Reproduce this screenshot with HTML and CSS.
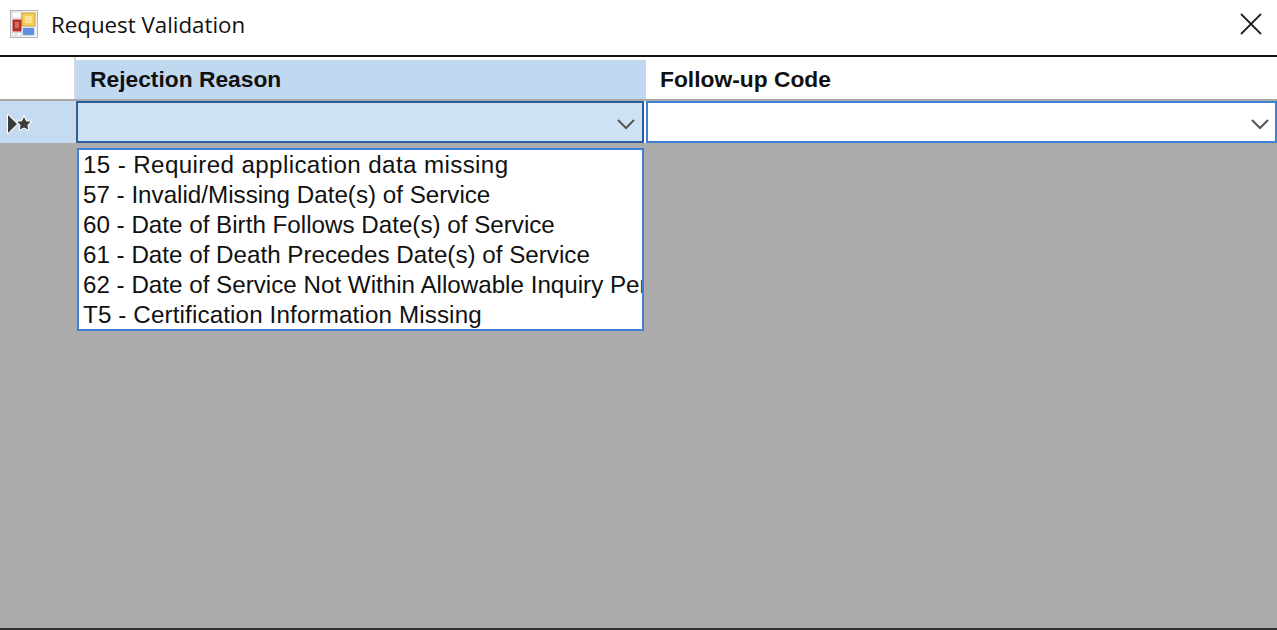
FILE: index.html
```html
<!DOCTYPE html>
<html lang="en">
<head>
    <meta charset="UTF-8">
    <meta name="viewport" content="width=device-width, initial-scale=1.0">
    <title>Request Validation</title>
    <link rel="stylesheet" href="styles.css">
</head>
<body>

    <!-- Title bar -->
    <header class="titlebar">
        <svg class="app-icon" viewBox="0 0 28 28" aria-hidden="true">
            <rect x="0.5" y="0.5" width="27" height="27" fill="#f4f4f4" stroke="#b4b4b4"/>
            <rect x="2" y="2" width="9" height="6" fill="#fff" stroke="#c4c4c4" stroke-width="0.6"/>
            <rect x="12" y="3" width="13" height="13" fill="#f5cf5e" stroke="#c9a02e"/>
            <rect x="15" y="6" width="7" height="7" fill="#fae394"/>
            <rect x="3" y="10" width="8" height="11" fill="#b8352a" stroke="#a32b22"/>
            <rect x="5" y="12" width="4" height="6" fill="#d8685c"/>
            <rect x="13" y="18" width="11" height="7" fill="#5c8fe0" stroke="#7ba6e6" stroke-width="0.6"/>
            <rect x="2.5" y="22.5" width="3" height="3.5" fill="#fff" stroke="#c4c4c4" stroke-width="0.6"/>
            <rect x="7" y="22.5" width="4" height="3.5" fill="#fff" stroke="#c4c4c4" stroke-width="0.6"/>
        </svg>
        <span class="window-title">Request Validation</span>
        <svg class="close-icon" viewBox="0 0 22 22" aria-hidden="true">
            <path d="M1 1 L21 21 M21 1 L1 21" fill="none" stroke="#222" stroke-width="1.8"/>
        </svg>
    </header>

    <!-- Grid -->
    <main class="grid-area">
        <div class="grid-row header-row">
            <div class="corner-cell"></div>
            <div class="col-head col-reason selected">Rejection Reason</div>
            <div class="col-head col-code">Follow-up Code</div>
        </div>

        <div class="grid-row edit-row">
            <div class="row-head">
                <svg class="row-marker" viewBox="0 0 26 20" aria-hidden="true">
                    <path class="marker-shape" d="M2 1 L11 10 L2 19 Z"/>
                    <path class="marker-shape" d="M18 3 L20.1 7.2 L24.7 7.8 L21.4 11 L22.2 15.5 L18 13.4 L13.8 15.5 L14.6 11 L11.3 7.8 L15.9 7.2 Z"/>
                </svg>
            </div>
            <div class="combo combo-active col-reason">
                <svg class="chevron" viewBox="0 0 20 12" aria-hidden="true"><path d="M2 2 L10 10 L18 2" fill="none" stroke="#555" stroke-width="2"/></svg>
            </div>
            <div class="combo col-code">
                <svg class="chevron" viewBox="0 0 20 12" aria-hidden="true"><path d="M2 2 L10 10 L18 2" fill="none" stroke="#555" stroke-width="2"/></svg>
            </div>
        </div>

        <!-- Open dropdown list -->
        <ul class="dropdown">
            <li>15 - Required application data missing</li>
            <li>57 - Invalid/Missing Date(s) of Service</li>
            <li>60 - Date of Birth Follows Date(s) of Service</li>
            <li>61 - Date of Death Precedes Date(s) of Service</li>
            <li>62 - Date of Service Not Within Allowable Inquiry Period</li>
            <li>T5 - Certification Information Missing</li>
        </ul>
    </main>

</body>
</html>
```

FILE: styles.css
```css
/* --- Window --- */
html, body {
    height: 100%;
    margin: 0;
}

body {
    display: flex;
    flex-direction: column;
    overflow: hidden;
    background-color: #fff;
    font-family: "Liberation Sans", Arial, sans-serif;
    color: #111;
}

.titlebar {
    flex: 0 0 55px;
    display: flex;
    align-items: center;
    padding: 0 15px 7px 10px;
    box-sizing: border-box;
}

.app-icon {
    width: 28px;
    height: 28px;
    margin-right: 13px;
}

.window-title {
    font-family: "Open Sans", "Noto Sans", sans-serif;
    font-size: 22.3px;
    flex: 1;
}

.close-icon {
    width: 22px;
    height: 22px;
}

/* --- Grid --- */
.grid-area {
    position: relative;
    flex: 1;
    background-color: #ababab;
    border-top: 2px solid #111;
    border-bottom: 2px solid #333;
}

.grid-row {
    display: grid;
    grid-template-columns: 76px 570px 1fr;
    background-color: #fff;
}

.header-row {
    height: 42px;
    border-bottom: 2px solid #a8a8a8;
}

.corner-cell {
    border-right: 2px solid #d8d8d8;
}

.col-head {
    display: flex;
    align-items: center;
    margin-top: 3px;
    padding-left: 14px;
    font-size: 22.8px;
    font-weight: bold;
}

.col-head.selected {
    background-color: #c0d8f0;
}

.edit-row {
    height: 42px;
}

.row-head {
    display: flex;
    align-items: center;
    padding-left: 6px;
    background-color: #c4dbf2;
    border-right: 2px solid #d8d8d8;
}

.row-marker {
    width: 26px;
    height: 20px;
    margin-top: 4px;
}

.marker-shape {
    fill: #3c3c3c;
    stroke: #fff;
    stroke-width: 2;
    paint-order: stroke;
}

.combo {
    display: flex;
    align-items: center;
    justify-content: flex-end;
    padding-right: 5px;
    border: 2px solid #3f80d6;
    background-color: #fff;
}

.combo-active {
    margin-right: 2px;
    padding-right: 6px;
    border-color: #2b5f9e;
    background-color: #cfe2f5;
}

.chevron {
    width: 20px;
    height: 12px;
    margin-top: 4px;
}

/* --- Dropdown list --- */
.dropdown {
    position: absolute;
    left: 77px;
    top: 91px;
    width: 559px;
    height: 179px;
    margin: 0;
    padding: 0 0 0 4px;
    overflow: hidden;
    list-style: none;
    background-color: #fff;
    border: 2px solid #3f80d6;
}

.dropdown li {
    height: 30px;
    line-height: 30px;
    font-size: 24.2px;
    white-space: nowrap;
}

.dropdown li:first-child {
    letter-spacing: 0.37px;
}

.dropdown li:last-child {
    letter-spacing: 0.13px;
}
```
